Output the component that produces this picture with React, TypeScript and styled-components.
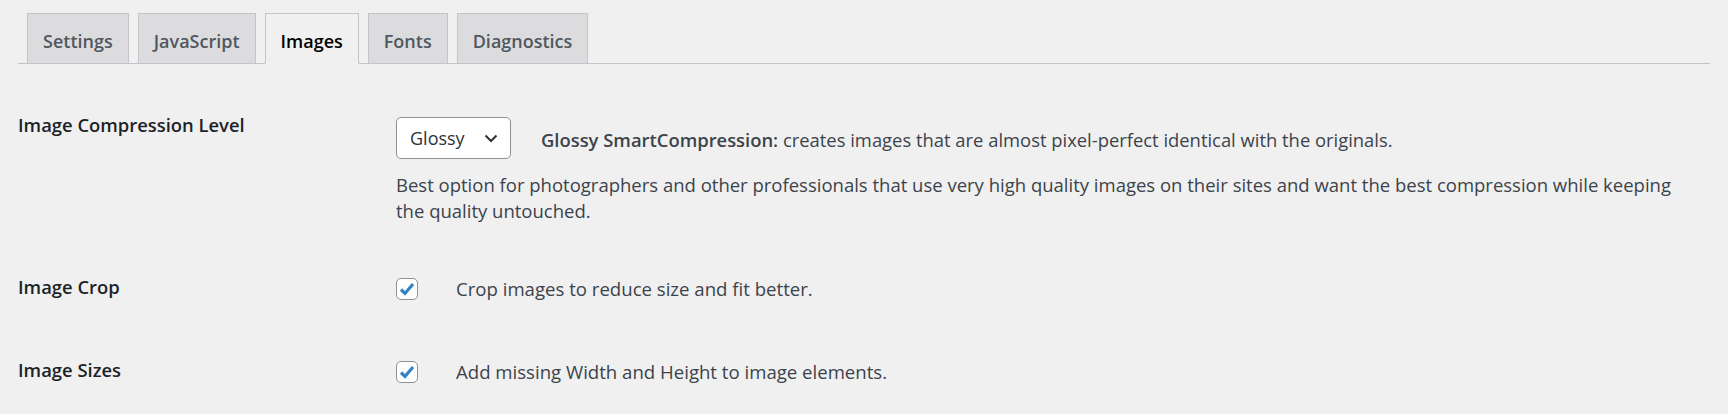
import styled, { createGlobalStyle } from "styled-components";

const GlobalStyle = createGlobalStyle`
    body {
        margin: 0;
        background: #f0f0f1;
        font-family: "Open Sans", "Noto Sans", sans-serif;
        color: #3c434a;
    }
`;

const tabs = ["Settings", "JavaScript", "Images", "Fonts", "Diagnostics"];

const ChevronDown = () => (
    <svg width="14" height="9" viewBox="0 0 14 9" fill="none">
        <path d="M1.5 1.5L7 7L12.5 1.5" stroke="#2c3338" strokeWidth="2" />
    </svg>
);

const CheckMark = () => (
    <svg width="16" height="14" viewBox="0 0 16 14" fill="none">
        <path d="M2 7.5L6 11.5L14 2" stroke="#3582c4" strokeWidth="3.2" strokeLinejoin="miter" />
    </svg>
);

export default function App() {
    return (
        <>
            <GlobalStyle />
            <Page>
                <TabBar>
                    {tabs.map((t) => (
                        <Tab key={t} active={t === "Images"}>
                            {t}
                        </Tab>
                    ))}
                </TabBar>
                <Form>
                    <Row>
                        <Label>Image Compression Level</Label>
                        <Field>
                            <SelectLine>
                                <Select>
                                    <span>Glossy</span>
                                    <ChevronDown />
                                </Select>
                                <Note>
                                    <strong>Glossy SmartCompression:</strong> creates images that are almost
                                    pixel-perfect identical with the originals.
                                </Note>
                            </SelectLine>
                            <Description>
                                Best option for photographers and other professionals that use very high quality
                                images on their sites and want the best compression while keeping the quality
                                untouched.
                            </Description>
                        </Field>
                    </Row>
                    <Row>
                        <Label>Image Crop</Label>
                        <CheckLine>
                            <Checkbox>
                                <CheckMark />
                            </Checkbox>
                            Crop images to reduce size and fit better.
                        </CheckLine>
                    </Row>
                    <Row>
                        <Label>Image Sizes</Label>
                        <CheckLine>
                            <Checkbox>
                                <CheckMark />
                            </Checkbox>
                            Add missing Width and Height to image elements.
                        </CheckLine>
                    </Row>
                </Form>
            </Page>
        </>
    );
}

const Page = styled.div`
    padding: 13px 18px 0 18px;
`;

const TabBar = styled.div`
    display: flex;
    gap: 9px;
    padding-left: 9px;
    border-bottom: 1px solid #c3c4c7;
    height: 50px;
`;

const Tab = styled.div<{ active?: boolean }>`
    box-sizing: border-box;
    height: 51px;
    padding: 0 15px;
    display: flex;
    align-items: center;
    padding-top: 4px;
    font-size: 18px;
    font-weight: 600;
    color: ${(p) => (p.active ? "#000" : "#50575e")};
    background: ${(p) => (p.active ? "#f0f0f1" : "#dcdcde")};
    border: 1px solid #c3c4c7;
    border-bottom-color: ${(p) => (p.active ? "#f0f0f1" : "#c3c4c7")};
`;

const Form = styled.div`
    padding-top: 23px;
`;

const Row = styled.div`
    display: grid;
    grid-template-columns: 378px 1fr;
    padding: 25px 0;
`;

const Label = styled.div`
    font-size: 18.4px;
    font-weight: 600;
    line-height: 26px;
    color: #1d2327;
`;

const Field = styled.div`
    padding-top: 5px;
`;

const SelectLine = styled.div`
    display: flex;
    align-items: center;
    gap: 30px;
`;

const Select = styled.div`
    box-sizing: border-box;
    width: 115px;
    height: 42px;
    padding: 0 12px 0 13px;
    display: flex;
    align-items: center;
    justify-content: space-between;
    background: #fff;
    border: 1px solid #8c8f94;
    border-radius: 5px;
    font-size: 18px;
    color: #2c3338;
`;

const Note = styled.div`
    font-size: 18.4px;
    line-height: 26px;
    padding-top: 4px;
    strong {
        font-weight: 600;
    }
`;

const Description = styled.p`
    margin: 13px 0 0;
    font-size: 18.5px;
    line-height: 26px;
    max-width: 1290px;
`;

const CheckLine = styled.div`
    display: flex;
    align-items: center;
    gap: 38px;
    font-size: 18.6px;
    line-height: 30px;
    padding-bottom: 3px;
`;

const Checkbox = styled.span`
    box-sizing: border-box;
    width: 22px;
    height: 22px;
    display: flex;
    align-items: center;
    justify-content: center;
    background: #fff;
    border: 1px solid #8c8f94;
    border-radius: 5px;
`;
